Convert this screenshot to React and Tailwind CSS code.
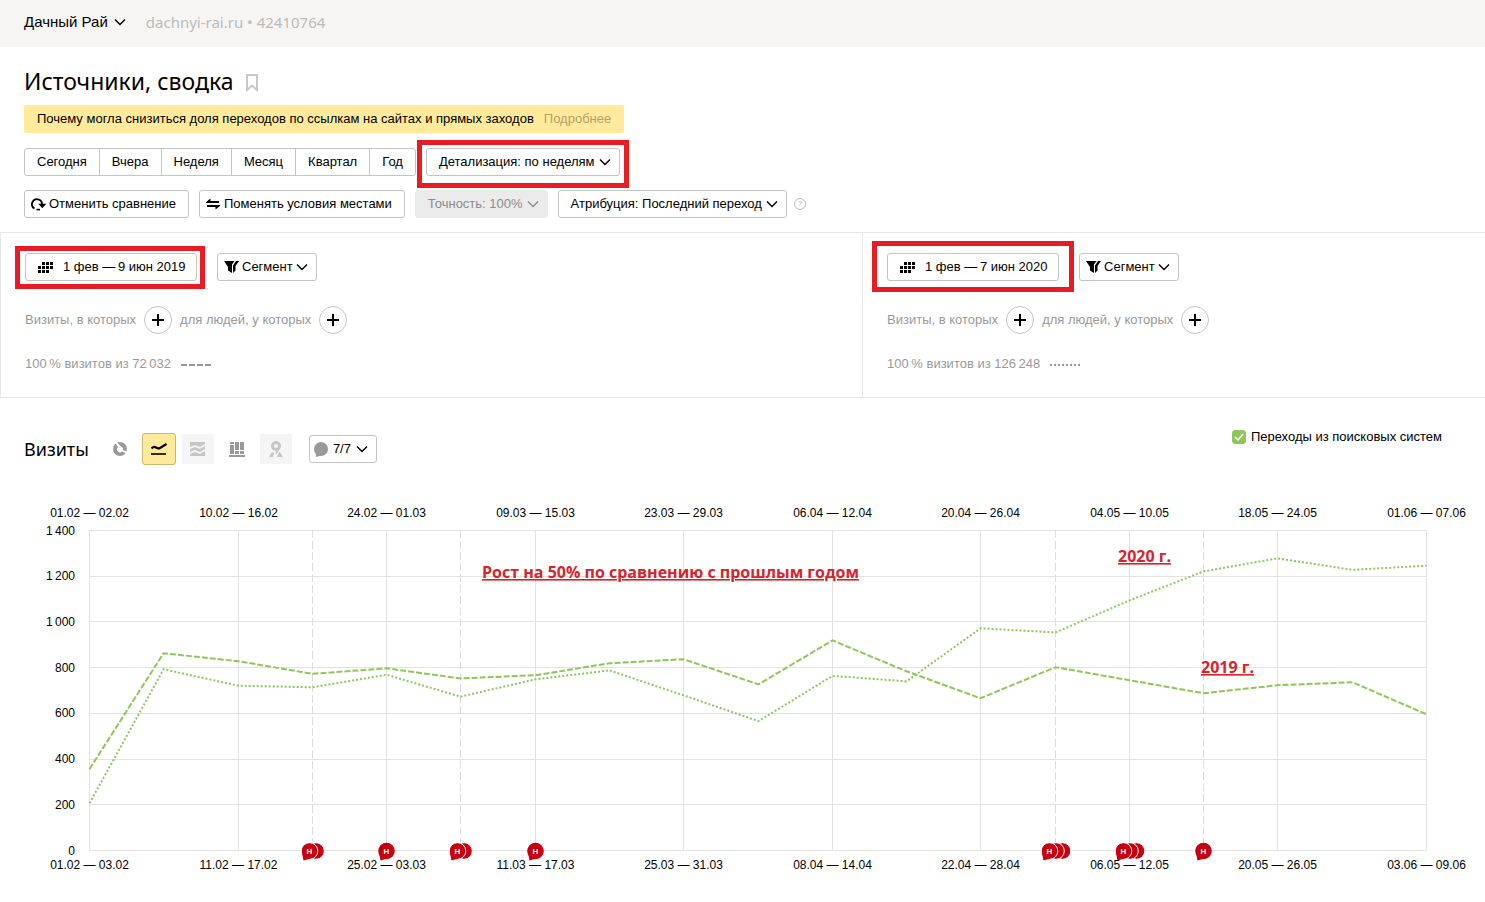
import { useLayoutEffect, useRef, useState } from 'react';
import clsx from 'clsx';

const PERIODS = ['Сегодня', 'Вчера', 'Неделя', 'Месяц', 'Квартал', 'Год'];

const TOP_LABELS = [
  '01.02 — 02.02', '10.02 — 16.02', '24.02 — 01.03', '09.03 — 15.03', '23.03 — 29.03',
  '06.04 — 12.04', '20.04 — 26.04', '04.05 — 10.05', '18.05 — 24.05', '01.06 — 07.06',
];
const BOTTOM_LABELS = [
  '01.02 — 03.02', '11.02 — 17.02', '25.02 — 03.03', '11.03 — 17.03', '25.03 — 31.03',
  '08.04 — 14.04', '22.04 — 28.04', '06.05 — 12.05', '20.05 — 26.05', '03.06 — 09.06',
];

const VISITS_2019 = [
  356, 863, 828, 773, 797, 753, 767, 819, 837, 727, 919, 784, 666, 802, 745, 688, 723, 736, 596,
];
const VISITS_2020 = [
  207, 793, 721, 714, 769, 673, 749, 788, 679, 566, 764, 740, 972, 954, 1094, 1221, 1278, 1228, 1246,
];

const NOTES = [
  { week: 3, count: 2 },
  { week: 4, count: 1 },
  { week: 5, count: 2 },
  { week: 6, count: 1 },
  { week: 13, count: 3 },
  { week: 14, count: 3 },
  { week: 15, count: 1 },
];

const Y_MAX = 1400;
const Y_STEP = 200;
const CHART = { left: 90, right: 58, top: 30, height: 320 };

function Chevron({ className }) {
  return (
    <svg viewBox="0 0 12 8" className={clsx('h-2 w-3 shrink-0', className)} fill="none" stroke="currentColor" strokeWidth="1.4">
      <path d="M1 1.5 6 6.5 11 1.5" />
    </svg>
  );
}

function Button({ className, disabled, children, ...rest }) {
  return (
    <button
      type="button"
      disabled={disabled}
      className={clsx(
        'flex h-7 items-center whitespace-nowrap rounded-[3px] border text-[13px] leading-4',
        disabled ? 'border-[#ebebeb] bg-[#ebebeb] text-[#8c8c8c]' : 'border-[#c4c4c4] bg-white',
        className
      )}
      {...rest}
    >
      {children}
    </button>
  );
}

function Highlight({ className }) {
  return <div className={clsx('pointer-events-none absolute border-5 border-[#e81c24]', className)} />;
}

function BookmarkIcon() {
  return (
    <svg viewBox="0 0 14 18" className="h-[18px] w-3.5" fill="none" stroke="#c8c8c8" strokeWidth="2">
      <path d="M2 1h10v15l-5-4.5L2 16z" />
    </svg>
  );
}

function UndoIcon() {
  return (
    <svg viewBox="0 0 16 14" className="h-3.5 w-4" fill="none" stroke="#000" strokeWidth="1.8">
      <path d="M3.500 11.500A5 5 0 1 1 11 7.500" />
      <path d="M7.300 6.800h8L11.300 11.200z" fill="#000" stroke="none" />
      <path d="M5.500 12.600h3.500" strokeWidth="1.600" />
    </svg>
  );
}

function SwapIcon() {
  return (
    <svg viewBox="0 0 14 12" className="mr-0.5 -ml-0.5 h-3 w-3.5" fill="#000">
      <path d="M0 4 4.500.5V3H13v2H0zM14 8l-4.500 3.500V9H1V7h13z" />
    </svg>
  );
}

function CalendarIcon() {
  const cells = [
    [4, 0], [8, 0], [12, 0],
    [0, 4], [4, 4], [8, 4], [12, 4],
    [0, 8], [4, 8], [8, 8],
  ];
  return (
    <svg viewBox="0 0 15 11" className="h-[11px] w-[15px] shrink-0" fill="#000">
      {cells.map(([x, y]) => (
        <rect key={`${x}-${y}`} x={x} y={y} width="3" height="3" />
      ))}
    </svg>
  );
}

function FunnelIcon() {
  return (
    <svg viewBox="0 0 15 12" className="h-3 w-[15px]" fill="#000">
      <path d="M0 0h10.500L8 3.500V12L4 9.500V6z" />
      <path d="M12 0h3l-3.500 5v4.500L9 12V4.500z" />
    </svg>
  );
}

function PlusButton({ label }) {
  return (
    <button
      type="button"
      aria-label={label}
      className="flex size-7 items-center justify-center rounded-full border border-[#c4c4c4] bg-white"
    >
      <svg viewBox="0 0 12 12" className="size-3" stroke="#000" strokeWidth="2">
        <path d="M6 0v12M0 6h12" />
      </svg>
    </button>
  );
}

function SegmentPanel({ dates, total, line, frame }) {
  return (
    <section className="border-l border-[#e6e6e6] px-6 pt-5 pb-[23px]">
      <div className="flex gap-5">
        <div className="relative">
          <Button className="w-[172px] px-3">
            <CalendarIcon />
            <span className="ml-2.5">{dates}</span>
          </Button>
          <Highlight className={frame} />
        </div>
        <Button className="gap-[3px] px-1.5 pr-2">
          <FunnelIcon />
          Сегмент
          <Chevron />
        </Button>
      </div>
      <div className="mt-[25px] flex items-center gap-2 text-[13px] text-[#999]">
        <span>Визиты, в которых</span>
        <PlusButton label="Добавить условие для визитов" />
        <span>для людей, у которых</span>
        <PlusButton label="Добавить условие для людей" />
      </div>
      <div className="mt-5 flex items-center gap-2.5 text-[13px] leading-5 text-[#999]">
        <span>{total}</span>
        <svg viewBox="0 0 31 2" className="mt-0.5 h-0.5 w-[31px]" stroke="#999" strokeWidth="2">
          <path d="M0 1h31" strokeDasharray={line === 'dashed' ? '6 2' : '2 2'} />
        </svg>
      </div>
    </section>
  );
}

function PieIcon() {
  return (
    <svg viewBox="0 0 14 14" className="size-3.5">
      <circle cx="7" cy="7" r="7" fill="#999" />
      <path d="M3.500 0 8 4.500A3 3 0 0 1 10 8l4.500 2-1 1.500L9 9.500A3 3 0 0 1 5 5L2.500 1z" fill="#fff" />
    </svg>
  );
}

function LinesIcon() {
  return (
    <svg viewBox="0 0 16 12" className="h-3 w-4" fill="none" stroke="#000">
      <path d="M.5 5.500C2 4 3.500 3.500 5 4.500S7.500 6 9 5l6.500-4" strokeWidth="2.200" />
      <path d="M0 11h15" strokeWidth="1.600" />
    </svg>
  );
}

function AreasIcon() {
  return (
    <svg viewBox="0 0 15 14" className="h-3.5 w-[15px]" fill="#c6c6c6">
      <path d="M0 0h15v2l-5 3-5-2-5 2z" />
      <path d="M0 7l5-2 5 2 5-3v3l-5 3-5-2-5 2z" />
      <path d="M0 12l5-2 5 2 5-3v5H0z" />
    </svg>
  );
}

function ColumnsIcon() {
  return (
    <svg viewBox="0 0 16 15" className="h-[15px] w-4" fill="#999">
      <path d="M1 0h4v2H1zM1 3h4v9H1zM6 0h4v8H6zM6 9h4v3H6zM11 0h4v8h-4zM11 9h4v3h-4zM0 13h16v2H0z" />
    </svg>
  );
}

function MapIcon() {
  return (
    <svg viewBox="0 0 14 16" className="h-4 w-3.5" fill="#c6c6c6">
      <path fillRule="evenodd" d="M7 0a5 5 0 0 1 5 5c0 3-3 4-4 8H6.500L7 10C4 9.500 2 8 2 5a5 5 0 0 1 5-5zm0 3a2 2 0 1 0 0 4 2 2 0 0 0 0-4z" />
      <path d="M3 11l2 1-1 4H0zM10.500 10.500 14 16H8z" />
    </svg>
  );
}

const VIEWS = [
  { id: 'pie', label: 'Круговая диаграмма', Icon: PieIcon, style: 'border-transparent' },
  { id: 'lines', label: 'Линии', Icon: LinesIcon, style: 'rounded-[3px] border-[#c9b76f] bg-[#ffe99b]' },
  { id: 'areas', label: 'Области', Icon: AreasIcon, style: 'border-white bg-[#f5f5f5]', disabled: true },
  { id: 'columns', label: 'Колонки', Icon: ColumnsIcon, style: 'border-transparent' },
  { id: 'map', label: 'Карта', Icon: MapIcon, style: 'border-white bg-[#f5f5f5]', disabled: true },
];

function NoteMarker({ x, y, count }) {
  const extra = Array.from({ length: count - 1 }, (_, i) => count - 1 - i);
  return (
    <g transform={`translate(${x - 3 * (count - 1)} ${y})`}>
      {extra.map((i) => (
        <circle key={i} cx={i * 6.500} cy="0" r="8.300" fill="#c7000f" stroke="#fff" strokeWidth="1" />
      ))}
      <circle r="8.300" fill="#c7000f" stroke={count > 1 ? '#fff' : 'none'} />
      <path d="M-7.500 2-6 9.500 1 7.500z" fill="#c7000f" />
      <text y="3" textAnchor="middle" fill="#fff" fontSize="8" fontWeight="700">Н</text>
    </g>
  );
}

function VisitsChart() {
  const box = useRef(null);
  const [width, setWidth] = useState(1485);

  useLayoutEffect(() => {
    const update = () => setWidth(box.current.clientWidth);
    update();
    const observer = new ResizeObserver(update);
    observer.observe(box.current);
    return () => observer.disconnect();
  }, []);

  const weeks = VISITS_2019.length - 1;
  const plotWidth = width - CHART.left - CHART.right;
  const bottom = CHART.top + CHART.height;
  const x = (week) => Math.round(CHART.left + (plotWidth * week) / weeks) - 0.5;
  const y = (value) => bottom + 0.5 - (value / Y_MAX) * CHART.height;
  const toPoints = (values) => values.map((v, i) => `${x(i)},${y(v)}`).join(' ');
  const ticks = Array.from({ length: Y_MAX / Y_STEP + 1 }, (_, i) => i * Y_STEP);
  const dashedWeeks = NOTES.map((n) => n.week).filter((week) => week % 2 === 1);

  return (
    <div ref={box} className="mt-[35px] w-full">
      <svg width={width} height="400" fontSize="12" fill="#000" className="block font-['Liberation_Sans',Arial,sans-serif]">
        {ticks.map((t) => (
          <g key={t}>
            <line x1={x(0)} x2={x(weeks)} y1={Math.floor(y(t)) + 0.5} y2={Math.floor(y(t)) + 0.5} stroke="#e2e2e2" />
            <text x={CHART.left - 15} y={y(t) + 4} textAnchor="end">
              {t >= 1000 ? `${Math.floor(t / 1000)}\u2009${String(t % 1000).padStart(3, '0')}` : t}
            </text>
          </g>
        ))}
        {TOP_LABELS.map((label, i) => (
          <g key={label} textAnchor="middle">
            <line x1={x(i * 2)} x2={x(i * 2)} y1={CHART.top} y2={bottom} stroke="#e2e2e2" />
            <text x={x(i * 2)} y={CHART.top - 13}>{label}</text>
            <text x={x(i * 2)} y={bottom + 19}>{BOTTOM_LABELS[i]}</text>
          </g>
        ))}
        {dashedWeeks.map((week) => (
          <line key={week} x1={x(week)} x2={x(week)} y1={CHART.top} y2={bottom} stroke="#dcdcdc" strokeDasharray="8 3" />
        ))}

        <polyline points={toPoints(VISITS_2019)} fill="none" stroke="#8fc859" strokeWidth="2" strokeDasharray="6 2" />
        <polyline points={toPoints(VISITS_2020)} fill="none" stroke="#8fc859" strokeWidth="2" strokeDasharray="2 2" />

        {NOTES.map((note) => (
          <NoteMarker key={note.week} x={x(note.week)} y={bottom + 1} count={note.count} />
        ))}

        <g fill="#d8232a" fontSize="16" fontWeight="700" textAnchor="middle" textDecoration="underline" className="font-['Open_Sans',sans-serif]">
          <text x={x(7.82)} y="78">Рост на 50% по сравнению с прошлым годом</text>
          <text x={x(14.2)} y="62">2020 г.</text>
          <text x={x(15.32)} y="173">2019 г.</text>
        </g>
      </svg>
    </div>
  );
}

export default function App() {
  const [searchTraffic, setSearchTraffic] = useState(true);

  return (
    <div className="min-h-screen bg-white font-['Liberation_Sans',Arial,sans-serif] text-black">
      <header className="flex h-[47px] items-center bg-[#f6f5f3] px-6 pb-[3px] text-[15px]">
        <button type="button" className="flex items-center gap-1.5">
          Дачный Рай
          <Chevron />
        </button>
        <span className="ml-5 font-['Noto_Sans',sans-serif] text-[#bbb]">dachnyi-rai.ru • 42410764</span>
      </header>

      <div className="px-6 pt-4">
        <div className="flex items-center gap-3">
          <h1 className="font-['Noto_Sans',sans-serif] text-[23px] leading-9">Источники, сводка</h1>
          <button type="button" aria-label="В избранное" className="pt-1">
            <BookmarkIcon />
          </button>
        </div>

        <div className="mt-1.5 flex">
          <p className="flex h-7 items-center gap-2.5 rounded-xs bg-[#ffe99b] px-[13px] text-[13px]">
            Почему могла снизиться доля переходов по ссылкам на сайтах и прямых заходов
            <a href="#more" className="text-[#b3a268]">Подробнее</a>
          </p>
        </div>

        <div className="mt-[15px] flex gap-2.5">
          <div className="flex h-7 overflow-hidden rounded-[3px] border border-[#c4c4c4]">
            {PERIODS.map((period, i) => (
              <button
                key={period}
                type="button"
                className={clsx('px-3 text-[13px] leading-4', i > 0 && 'border-l border-[#c4c4c4]')}
              >
                {period}
              </button>
            ))}
          </div>
          <div className="relative">
            <Button className="gap-1 px-3 pr-2">
              Детализация: по неделям
              <Chevron />
            </Button>
            <Highlight className="-top-2 -right-[9px] -bottom-3 -left-[9px]" />
          </div>
        </div>

        <div className="mt-3.5 flex items-center gap-2.5">
          <Button className="gap-0.5 px-1.5 pr-3">
            <UndoIcon />
            Отменить сравнение
          </Button>
          <Button className="gap-0.5 px-2 pr-3">
            <SwapIcon />
            Поменять условия местами
          </Button>
          <Button disabled className="gap-1 px-3 pr-2">
            Точность: 100%
            <Chevron />
          </Button>
          <Button className="gap-1 px-3 pr-2">
            Атрибуция: Последний переход
            <Chevron />
          </Button>
          <button
            type="button"
            aria-label="Справка"
            className="-ml-[3px] flex size-3 items-center justify-center rounded-full border border-[#bbb] text-[8px] leading-none text-[#aaa]"
          >
            ?
          </button>
        </div>
      </div>

      <div className="mt-3.5 grid grid-cols-[5805fr_4195fr] border-y border-[#e6e6e6]">
        <SegmentPanel
          dates={'1 фев —\u20099 июн 2019'}
          total={'100\u2009% визитов из 72\u2009032'}
          line="dashed"
          frame="-top-[7px] -right-2 -bottom-2 -left-2.5"
        />
        <SegmentPanel
          dates={'1 фев —\u20097 июн 2020'}
          total={'100\u2009% визитов из 126\u2009248'}
          line="dotted"
          frame="-top-3 -right-[15px] -bottom-[11px] -left-[15px]"
        />
      </div>

      <div className="mt-[35px] flex items-start pr-[43px] pl-6">
        <div className="flex items-center">
          <h2 className="mr-3.5 font-['Noto_Sans',sans-serif] text-lg leading-8">Визиты</h2>
          <div className="flex gap-[5px]">
            {VIEWS.map(({ id, label, Icon, style, disabled }) => (
              <button
                key={id}
                type="button"
                aria-label={label}
                disabled={disabled}
                className={clsx('flex h-8 w-[34px] items-center justify-center border', style)}
              >
                <Icon />
              </button>
            ))}
          </div>
          <Button className="ml-4 gap-[5px] px-1 pr-2">
            <svg viewBox="0 0 14 15" className="h-[15px] w-3.5" fill="#999">
              <circle cx="7" cy="7" r="7" />
              <path d="M1.500 9 2 15l5-1.500z" />
            </svg>
            7/7
            <Chevron />
          </Button>
        </div>
        <label className="-mt-1 ml-auto flex items-center gap-[5px] text-[13px] leading-4">
          <span className="relative flex size-3.5">
            <input
              type="checkbox"
              checked={searchTraffic}
              onChange={(e) => setSearchTraffic(e.target.checked)}
              className="size-3.5 appearance-none rounded-[3px] border border-[#8fc859] checked:bg-[#8fc859]"
            />
            {searchTraffic && (
              <svg viewBox="0 0 14 14" className="pointer-events-none absolute inset-0 size-3.5" fill="none" stroke="#fff" strokeWidth="1.5">
                <path d="M3 7l3 3 5-6" />
              </svg>
            )}
          </span>
          Переходы из поисковых систем
        </label>
      </div>

      <VisitsChart />
    </div>
  );
}
